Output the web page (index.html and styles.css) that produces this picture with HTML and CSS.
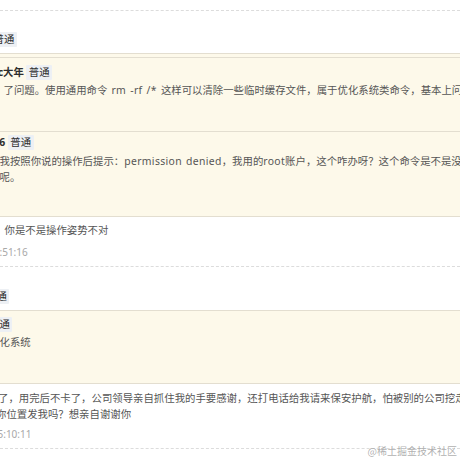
FILE: index.html
```html
<!DOCTYPE html>
<html lang="zh-CN">
<head>
<meta charset="utf-8">
<title>评论</title>
<link rel="stylesheet" href="styles.css">
</head>
<body>
<div class="page">
  <div class="sep-top"></div>

  <div class="comment c1">
    <div class="head h1"><span class="tag">普通</span></div>
    <div class="quote outer">
      <div class="quote nested">
        <div class="qhead qh-a"><span class="name">c大年</span><span class="tag">普通</span></div>
        <p class="qtext qt-a">了问题。使用通用命令<span class="lat"> rm -rf /* </span>这样可以清除一些临时缓存文件，属于优化系统类命令，基本上问题都能解决</p>
      </div>
      <div class="qhead qh-b"><span class="name">6</span><span class="tag">普通</span></div>
      <p class="qtext qt-b">我按照你说的操作后提示：<span class="lat">permission denied</span>，我用的<span class="lat">root</span>账户，这个咋办呀？这个命令是不是没有用<br>呢。</p>
    </div>
    <p class="reply r1">你是不是操作姿势不对</p>
    <div class="time tm1">:51:16</div>
  </div>

  <div class="comment c2">
    <div class="head h2"><span class="tag">普通</span></div>
    <div class="quote single">
      <div class="qhead qh-c"><span class="tag">普通</span></div>
      <p class="qtext qt-c">化系统</p>
    </div>
    <p class="reply r2">了，用完后不卡了，公司领导亲自抓住我的手要感谢，还打电话给我请来保安护航，怕被别的公司挖走<br>你位置发我吗？想亲自谢谢你</p>
    <div class="time tm2">5:10:11</div>
  </div>
</div>
<div class="watermark">@稀土掘金技术社区</div>
</body>
</html>
```

FILE: styles.css
```css
* {
  box-sizing: border-box;
}

html,
body {
  margin: 0;
  padding: 0;
}

body {
  position: relative;
  width: 460px;
  height: 460px;
  overflow: hidden;
  background: #ffffff;
  font-family: "Noto Sans", "Noto Sans CJK SC", sans-serif;
  font-size: 10.4px;
  line-height: 16px;
  color: #555555;
}

.page {
  white-space: nowrap;
}

.sep-top {
  height: 11px;
  border-bottom: 1px dashed #dcdcdc;
}

.comment {
  border-bottom: 1px dashed #dcdcdc;
  padding-bottom: 6px;
}

p {
  margin: 0;
}

.lat {
  letter-spacing: 0.35px;
  word-spacing: 1px;
}

.head,
.qhead {
  display: flex;
  align-items: center;
  height: 16px;
}

.tag {
  display: block;
  height: 15px;
  line-height: 15px;
  padding: 0 2.5px;
  background: #edf0f4;
  color: #2e2e2e;
  border-radius: 1px;
}

.name {
  font-weight: 700;
  color: #2e2e2e;
}

.name + .tag {
  margin-left: 2.5px;
}

.quote {
  background: #fdf9ea;
  border-style: solid;
  border-color: #e3ded0;
  border-width: 1px 0;
}

.outer {
  margin-top: 6px;
  padding: 3px 0 31px;
}

.nested {
  padding: 6px 0 33px;
}

.single {
  margin-top: 6px;
  padding: 5px 0 33px;
}

.qtext {
  margin-top: 2px;
}

.time {
  font-size: 10px;
  color: #a8a8a8;
}

/* comment 1 */
.h1 {
  margin-top: 20px;
}

.h1 .tag {
  margin-left: -9px;
}

.qh-a {
  margin-left: -2.3px;
}

.qt-a {
  margin-left: 3.5px;
}

.qh-b {
  margin-top: 2px;
  margin-left: -0.7px;
}

.qt-b {
  margin-top: 3px;
  margin-left: -0.5px;
}

.r1 {
  margin-top: 5px;
  margin-left: 4.5px;
}

.tm1 {
  margin-top: 6px;
  margin-left: -0.5px;
}

/* comment 2 */
.h2 {
  margin-top: 21px;
}

.h2 .tag {
  margin-left: -16.5px;
}

.qh-c .tag {
  margin-left: -13.5px;
}

.qt-c {
  margin-left: -0.5px;
}

.r2 {
  margin-top: 6px;
  margin-left: -4px;
  text-indent: 2px;
}

.tm2 {
  margin-top: 4px;
  margin-left: -2.5px;
}

.watermark {
  position: absolute;
  right: 3px;
  bottom: 2px;
  font-family: "Noto Sans CJK SC", sans-serif;
  font-size: 10px;
  line-height: 14px;
  color: rgba(155, 155, 155, 0.8);
  text-shadow: 0 0 1px rgba(255, 255, 255, 0.9);
}
```
